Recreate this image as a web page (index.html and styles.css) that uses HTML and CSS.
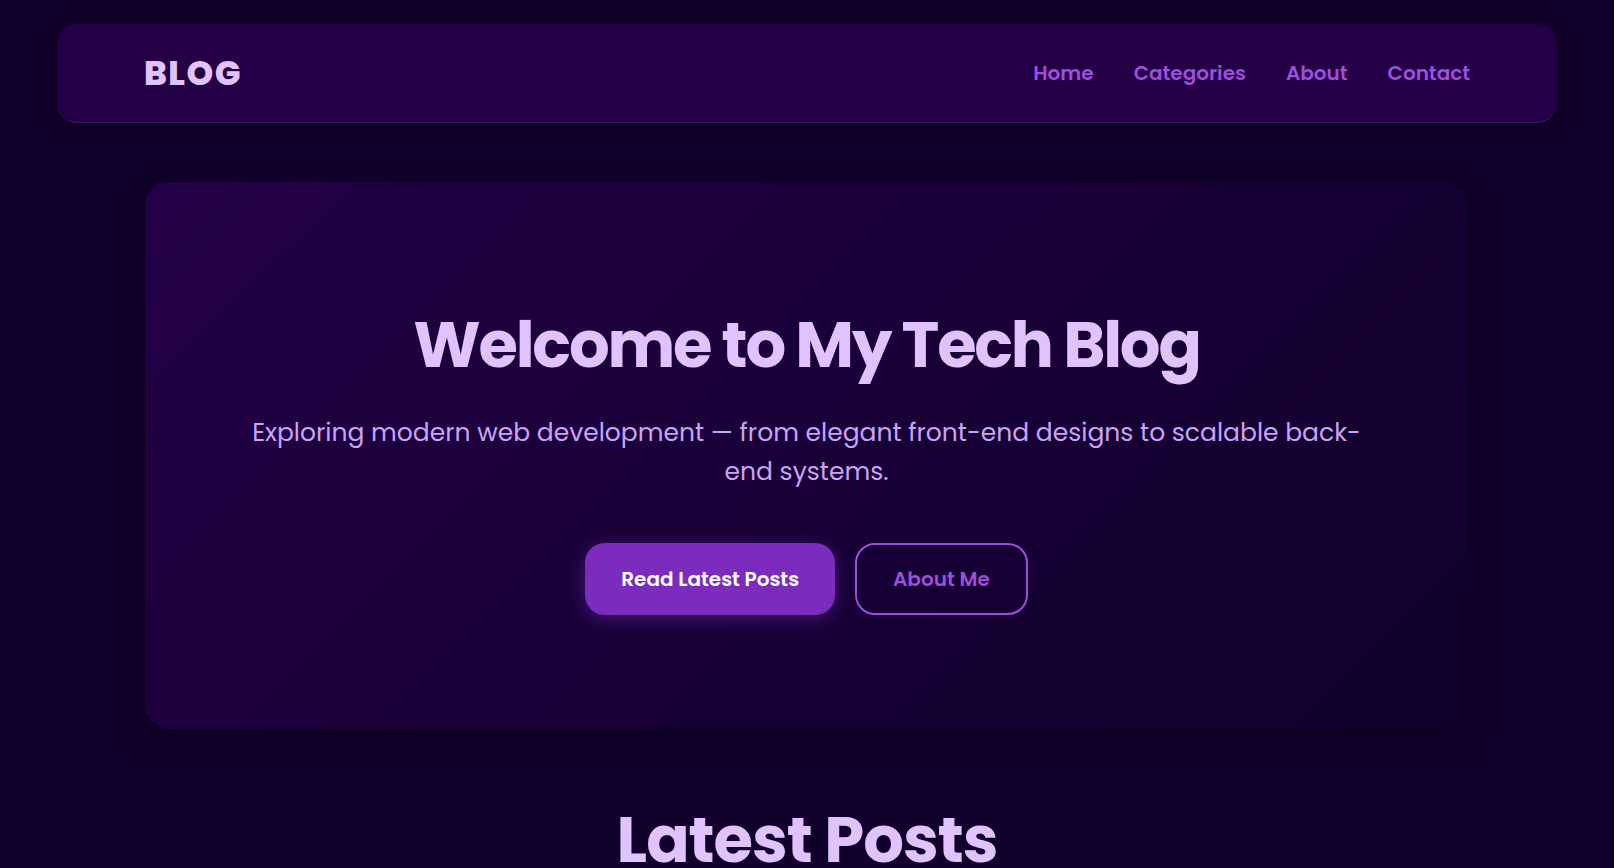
FILE: index.html
```html
<!DOCTYPE html>
<html lang="en">
  <head>
    <meta charset="UTF-8" />
    <meta name="viewport" content="width=device-width, initial-scale=1.0" />
    <title>My Tech Blog</title>
    <link rel="stylesheet" href="styles.css">
  </head>
  <body>
    <header class="navbar">
      <div class="logo">BLOG</div>
      <ul class="nav-links">
        <li><a href="#">Home</a></li>
        <li><a href="#">Categories</a></li>
        <li><a href="#">About</a></li>
        <li><a href="#">Contact</a></li>
      </ul>
    </header>

    <main>
      <section class="hero">
        <h1>Welcome to My Tech Blog</h1>
        <p>Exploring modern web development — from elegant front-end designs to scalable back-end systems.</p>
        <div class="hero-buttons">
          <a href="#posts" class="btn btn-primary">Read Latest Posts</a>
          <a href="#" class="btn btn-secondary">About Me</a>
        </div>
      </section>

      <section class="posts" id="posts">
        <h2 class="section-title">Latest Posts</h2>
      </section>
    </main>
  </body>
</html>
```

FILE: styles.css
```css
* {
  padding: 0;
  margin: 0;
  box-sizing: border-box;
  font-family: "Poppins", "Inter", sans-serif;
}

body {
  background-color: #10002b;
  color: #e0c3fc;
  overflow: hidden;
}

a {
  text-decoration: none;
}

/* barra de navegação */
.navbar {
  display: flex;
  justify-content: space-between;
  align-items: center;
  height: 99px;
  margin: 24px 57px 0;
  padding: 0 87px;
  background-color: #240046;
  border-radius: 20px;
  border-bottom: 1px solid rgba(157, 78, 221, 0.25);
  box-shadow: 0 4px 20px rgba(0, 0, 0, 0.25);
}

.logo {
  font-size: 34px;
  font-weight: 800;
  letter-spacing: 1.5px;
  color: #e0c3fc;
}

.nav-links {
  display: flex;
  gap: 40px;
  list-style: none;
}

.nav-links a {
  font-size: 20px;
  font-weight: 600;
  color: #9d4edd;
}

/* hero */
.hero {
  display: flex;
  flex-direction: column;
  align-items: center;
  height: 547px;
  margin: 59px 146px 0 145px;
  padding: 125px 100px 0;
  text-align: center;
  border-radius: 24px;
  background: linear-gradient(135deg, #240046 0%, #1a0039 45%, #10002b 100%);
  box-shadow: 0 10px 30px rgba(0, 0, 0, 0.25);
}

.hero h1 {
  font-size: 64px;
  font-weight: 700;
  line-height: 1.2;
  letter-spacing: -2.2px;
  color: #e0c3fc;
  margin-bottom: 30px;
}

.hero p {
  max-width: 1120px;
  font-size: 25px;
  font-weight: 400;
  line-height: 1.55;
  color: #c9a3f6;
  margin-bottom: 52px;
}

.hero-buttons {
  display: flex;
  gap: 20px;
}

.btn {
  display: inline-block;
  padding: 22px 36px;
  font-size: 20px;
  font-weight: 600;
  line-height: 28px;
  border-radius: 20px;
}

.btn-primary {
  background-color: #7b2cbf;
  color: #ffffff;
  box-shadow: 0 4px 18px rgba(123, 44, 191, 0.45);
}

.btn-secondary {
  padding: 20px 36px;
  border: 2px solid #9d4edd;
  color: #9d4edd;
}

/* posts */
.posts {
  padding-top: 73px;
  text-align: center;
}

.section-title {
  font-size: 64px;
  font-weight: 700;
  line-height: 1.2;
  letter-spacing: -1px;
  color: #e0c3fc;
}
```
